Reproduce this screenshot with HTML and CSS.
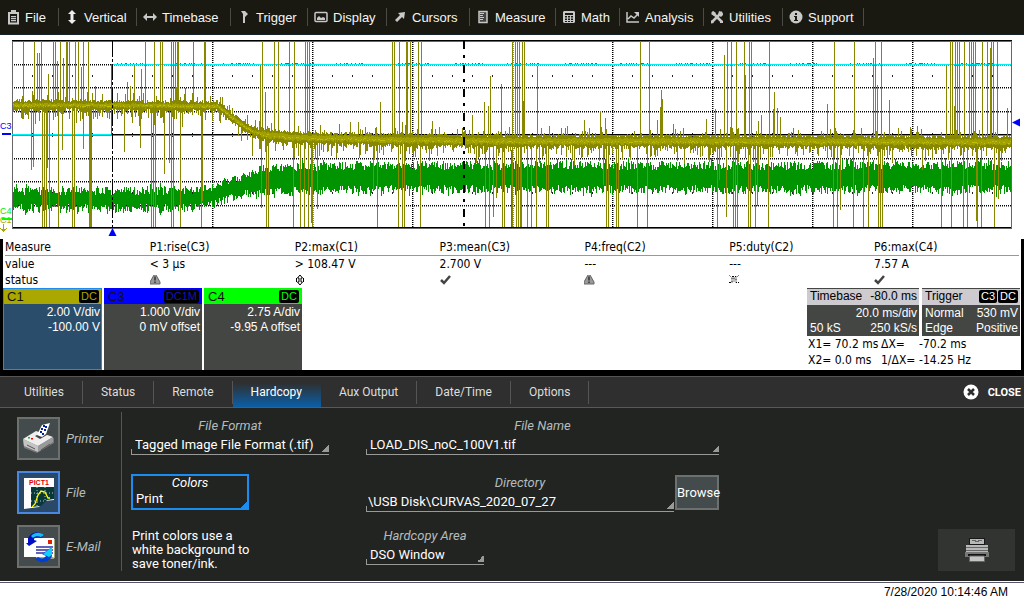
FILE: index.html
```html
<!DOCTYPE html>
<html lang="en">
<head>
<meta charset="utf-8">
<title>Oscilloscope – Hardcopy</title>
<link rel="stylesheet" href="styles.css">
</head>
<body>
<nav class="menubar">
  <button class="menu"><svg class="icon" viewBox="0 0 16 16"><path d="M4 4h9v10.500H4z" fill="none" stroke="#c8c8c8" stroke-width="2"/><path d="M6 1h5v3H6zM6 7h5v1.200H6zM6 9h5v1.200H6zM6 11h5v1.200H6z" fill="#c8c8c8"/></svg>File</button>
  <button class="menu"><svg class="icon" viewBox="0 0 16 16"><path d="M8 1l4 4H9.500v6H12l-4 4-4-4h2.500V5H4z" fill="#eee"/></svg>Vertical</button>
  <button class="menu"><svg class="icon" viewBox="0 0 16 16"><path d="M1 8l4-4v3h6V4l4 4-4 4V9H5v3z" fill="#c8c8c8"/></svg>Timebase</button>
  <button class="menu"><svg class="icon" viewBox="0 0 16 16"><path d="M7 2h2v12H7zM5 2h4l3 3-3 3z" fill="#c8c8c8"/></svg>Trigger</button>
  <button class="menu"><svg class="icon" viewBox="0 0 16 16"><rect x="2" y="3.500" width="12" height="9" rx="1" fill="none" stroke="#c8c8c8" stroke-width="1.500"/><path d="M4 11V9l2-2 2 2 2-1 2 1v2z" fill="#c8c8c8"/></svg>Display</button>
  <button class="menu"><svg class="icon" viewBox="0 0 16 16"><path d="M13 3l-1 7-2-2-5 5-2-2 5-5-2-2z" fill="#c8c8c8"/></svg>Cursors</button>
  <button class="menu"><svg class="icon" viewBox="0 0 16 16"><path d="M4 2.500h8v11H4z" fill="#444" stroke="#c8c8c8" stroke-width="1.500"/><path d="M5 4h4v1H5zM5 6h3v1H5zM5 8h4v1H5zM5 10h3v1H5z" fill="#c8c8c8"/></svg>Measure</button>
  <button class="menu"><svg class="icon" viewBox="0 0 16 16"><path fill-rule="evenodd" d="M3 2h10l1 1v10l-1 1H3l-1-1V3zM4 4v2h8V4zM4 7v1.500h2V7zM7 7v1.500h2V7zM10 7v1.500h2V7zM4 9.500V11h2V9.500zM7 9.500V11h2V9.500zM10 9.500V11h2V9.500zM4 12v1h2v-1zM7 12v1h2v-1zM10 12v1h2v-1z" fill="#c8c8c8"/></svg>Math</button>
  <button class="menu"><svg class="icon" viewBox="0 0 16 16"><path d="M2 3v10h12M3 10l3-3 3 2 4-4" fill="none" stroke="#c8c8c8" stroke-width="1.500"/><path d="M9 3h5v5z" fill="#c8c8c8"/></svg>Analysis</button>
  <button class="menu"><svg class="icon" viewBox="0 0 16 16"><path d="M3 3l10 10M13 3L3 13" stroke="#c8c8c8" stroke-width="2.500"/><path d="M10 2l2 1v2l2-1v2l-2 2-3-2zM2 5l3 2 2-3-3-2v2zM2 11l3 3-3 .5zM11 11l3 1v2h-3z" fill="#c8c8c8"/></svg>Utilities</button>
  <button class="menu"><svg class="icon" viewBox="0 0 16 16"><circle cx="8" cy="8" r="6.500" fill="#c8c8c8"/><path d="M7 4h2v2H7zM6 7h3v4h1v1H6v-1h1V8H6z" fill="#191911"/></svg>Support</button>
</nav>

<main class="screen">
  <svg class="scope" id="scope" viewBox="0 35 1024 204" role="img" aria-label="Waveform grid"></svg>

  <section class="readout">
    <table class="measure">
      <thead><tr><th>Measure</th><th>P1:rise(C3)</th><th>P2:max(C1)</th><th>P3:mean(C3)</th><th>P4:freq(C2)</th><th>P5:duty(C2)</th><th>P6:max(C4)</th></tr></thead>
      <tbody>
        <tr><td>value</td><td>&lt; 3 µs</td><td>&gt; 108.47 V</td><td>2.700 V</td><td>---</td><td>---</td><td>7.57 A</td></tr>
        <tr><td>status</td>
          <td><svg class="flag" viewBox="0 0 12 12"><path d="M4 1h2l4 7v2H0V8z" fill="#999"/><path d="M4 1L0 8v2h10V8L6 1" fill="none" stroke="#666"/><path d="M4.500 2.500h1v4h-1zM4.500 7.500h1v1.500h-1z" fill="#000"/></svg></td>
          <td><svg class="flag" viewBox="0 0 12 12"><path d="M5 1L2.500 4H4v4H2.500L5 11l2.500-3H6V4h1.500z" fill="#fff" stroke="#000"/><path d="M1.500 4v4M8.500 4v4" stroke="#000"/></svg></td>
          <td><svg class="flag" viewBox="0 0 12 12"><path d="M1 6l3 3 6-7" fill="none" stroke="#444" stroke-width="2.500"/></svg></td>
          <td><svg class="flag" viewBox="0 0 12 12"><path d="M4 1h2l4 7v2H0V8z" fill="#999"/><path d="M4 1L0 8v2h10V8L6 1" fill="none" stroke="#666"/><path d="M4.500 2.500h1v4h-1zM4.500 7.500h1v1.500h-1z" fill="#000"/></svg></td>
          <td><svg class="flag" viewBox="0 0 12 12"><path d="M0 8.500h3v-6h4v6h3M5 3.500v4" fill="none" stroke="#000" stroke-dasharray="2 1"/><path d="M0 1l2 2M10 1L8 3" stroke="#888"/></svg></td>
          <td><svg class="flag" viewBox="0 0 12 12"><path d="M1 6l3 3 6-7" fill="none" stroke="#444" stroke-width="2.500"/></svg></td>
        </tr>
      </tbody>
    </table>

    <div class="descriptors">
      <button class="channel channel-c1"><span class="channel-head"><span>C1</span><span class="badge">DC</span></span><span class="channel-line">2.00 V/div</span><span class="channel-line">-100.00 V</span></button>
      <button class="channel channel-c3"><span class="channel-head"><span>C3</span><span class="badge">DC1M</span></span><span class="channel-line">1.000 V/div</span><span class="channel-line">0 mV offset</span></button>
      <button class="channel channel-c4"><span class="channel-head"><span>C4</span><span class="badge">DC</span></span><span class="channel-line">2.75 A/div</span><span class="channel-line">-9.95 A offset</span></button>
      <div class="acquisition">
        <div class="boxes">
          <button class="box"><span class="box-head"><span>Timebase</span><span>-80.0 ms</span></span><span class="box-line"><span></span><span>20.0 ms/div</span></span><span class="box-line"><span>50 kS</span><span>250 kS/s</span></span></button>
          <button class="box"><span class="box-head"><span>Trigger</span><span class="badges"><span class="badge badge-light">C3</span><span class="badge badge-light">DC</span></span></span><span class="box-line"><span>Normal</span><span>530 mV</span></span><span class="box-line"><span>Edge</span><span>Positive</span></span></button>
        </div>
        <div class="cursors"><span>X1= 70.2 ms</span><span>ΔX=</span><span>-70.2 ms</span><span>X2= 0.0 ms</span><span>1/ΔX=</span><span>-14.25 Hz</span></div>
      </div>
    </div>
  </section>
</main>

<section class="dialog">
  <div class="tabs">
    <button class="tab">Utilities</button><button class="tab">Status</button><button class="tab">Remote</button><button class="tab tab-active">Hardcopy</button><button class="tab">Aux Output</button><button class="tab">Date/Time</button><button class="tab">Options</button>
    <button class="close"><svg class="close-icon" viewBox="0 0 16 16"><circle cx="8" cy="8" r="7.500" fill="#fff"/><path d="M5 5l6 6M11 5l-6 6" stroke="#2f2f2f" stroke-width="2.500"/></svg>CLOSE</button>
  </div>

  <form class="panel">
    <div class="targets">
      <button type="button" class="target"><span class="tile"><svg class="art" viewBox="0 0 32 32"><path d="M0 17l14-8 17 6v5l-17 10L1 25z" fill="#777"/><path d="M0 16l13-8 17 6-15 9z" fill="#eee"/><path d="M0 16l15 7v6L1 23z" fill="#c4c4c4"/><path d="M15 23l15-9v5l-15 10z" fill="#999"/><path d="M12 13l12-6 5 2-12 7z" fill="#444"/><path d="M14 12l5-10 8-2-4 11-4 3z" fill="#fff"/><path d="M18 6h2M22 4h2M17 9h2M21 7h2M20 3h2M19 11h2" stroke="#0020a0" stroke-width="2"/><path d="M5 14h2v1.500H5z" fill="#0c0"/><path d="M8 15h2v1.500H8z" fill="#e00"/><path d="M4 22l8 4M18 27l9-6" stroke="#555"/></svg></span>Printer</button>
      <button type="button" class="target target-active"><span class="tile"><svg class="art" viewBox="0 0 32 32"><path d="M1 1h30v22l-10 1-5 6-15 2z" fill="#fff"/><path d="M8 10h23v12l-7 1-6 6-10 1z" fill="#083838"/><path d="M8 16h23M14 10v19M22 10v14M8 24h15" stroke="#b8c8c8" stroke-dasharray="1 2"/><path d="M9 30l3-3 3-9 3-4 4 1 3 6h2" fill="none" stroke="#ff0" stroke-width="1.300"/><text class="pict" x="6" y="8">PICT1</text></svg></span>File</button>
      <button type="button" class="target"><span class="tile"><svg class="art" viewBox="0 0 32 32"><path d="M1 7h30v19H1z" fill="#fff"/><path d="M13 27h18V8" fill="none" stroke="#ff9"/><path d="M25 9h4v4h-4z" fill="#e02000"/><path d="M13 16h17M13 19h17M13 22h17" stroke="#3030a0" stroke-width="1.500"/><path d="M3 12h2V7C8 1 15-1 21 4l-3 3c-3-2-6-1-7 1v1l3 1-8 5z" fill="#0010c0"/><path d="M8 5c4-4 9-4 13-1l-3 2c-3-1-6-1-8 1z" fill="#10c0f0"/><path d="M29 16v9c-3 7-12 8-17 3l3-2c3 2 6 2 8-1l-4-2z" fill="#0040d0"/><path d="M29 16v8l-3 2-6-3z" fill="#10d0f8"/></svg></span>E-Mail</button>
    </div>

    <div class="column column-narrow">
      <div class="field"><label class="label" for="format">File Format</label><select class="value" id="format"><option>Tagged Image File Format (.tif)</option></select></div>
      <div class="field field-focus"><label class="label" for="colors">Colors</label><select class="value" id="colors"><option>Print</option></select></div>
      <p class="note">Print colors use a white background to save toner/ink.</p>
    </div>

    <div class="column column-wide">
      <div class="field"><label class="label" for="name">File Name</label><input class="value" id="name" type="text" value="LOAD_DIS_noC_100V1.tif"></div>
      <div class="with-button">
        <div class="field"><label class="label" for="dir">Directory</label><input class="value value-path" id="dir" type="text" value="\USB Disk\CURVAS_2020_07_27"></div>
        <button type="button" class="browse">Browse</button>
      </div>
      <div class="field field-short"><label class="label" for="area">Hardcopy Area</label><select class="value" id="area"><option>DSO Window</option></select></div>
    </div>

    <button type="button" class="print" aria-label="Print"><svg class="print-icon" viewBox="0 0 24 24"><path d="M4 0h16v7H4z" fill="#181818"/><path d="M5 1h14v5H5zM1 7h22v9H1z" fill="#b8b8b8"/><path d="M7 2h4v1H7zM13 2h4v1h-4zM10 3h4v1h-4zM1 9h22v1H1zM1 12h22v1H1z" fill="#666"/><path d="M0 14h24v5H0z" fill="#777"/><path d="M3 16h18v2H3z" fill="#111"/><path d="M4.500 18h15v5.500h-15z" fill="#c4c4c4" stroke="#666"/></svg></button>
  </form>
</section>

<footer class="clock">7/28/2020 10:14:46 AM</footer>
<script src="scope.js"></script>
</body>
</html>
```

FILE: styles.css
```css
* { box-sizing: border-box; }

body {
  margin: 0;
  min-height: 100vh;
  background: #fff;
  color: #000;
  font-family: "Liberation Sans", Arial, sans-serif;
  font-size: 12px;
}

button, input, select {
  margin: 0;
  padding: 0;
  border: 0;
  border-radius: 0;
  background: none;
  color: inherit;
  font: inherit;
}

/* Menu bar */
.menubar {
  display: grid;
  grid-template-columns: 59px 78px 94px 77px 79px 83px 86px 64px 84px 79px 81px;
  height: 35px;
  padding: 8px 0;
  background: #191911;
  border-bottom: 1px solid #14202a;
  color: #f4f4f4;
  font-size: 13px;
}
.menu {
  display: flex;
  align-items: center;
  gap: 4px;
  padding-left: 5px;
  border-right: 1px solid #4a4a46;
  white-space: nowrap;
}
.icon { width: 16px; height: 16px; flex: none; }

/* Waveform display */
.scope { display: block; width: 100%; height: auto; }
.scope-tag { font: 9px "Liberation Sans", sans-serif; }

/* Measurements and descriptors */
.readout {
  border: solid #000;
  border-width: 0 3px 6px;
}
.measure {
  width: calc(100% - 4px);
  margin-left: 2px;
  border-collapse: collapse;
  table-layout: fixed;
  font: 12px/16px "DejaVu Sans Condensed", "DejaVu Sans", sans-serif;
}
.measure th, .measure td {
  height: 16px;
  padding: 0;
  font-weight: normal;
  text-align: left;
  white-space: nowrap;
}
.measure th { border-bottom: 1px solid #999; }
.flag { display: block; width: 12px; height: 12px; }

.descriptors { display: flex; gap: 2px; align-items: stretch; }
.channel {
  display: flex;
  flex-direction: column;
  width: 98px;
  height: 82px;
  background: #444643;
  color: #fff;
  line-height: 15px;
  text-align: right;
}
.channel-head {
  display: flex;
  justify-content: space-between;
  align-items: center;
  height: 16px;
  margin-bottom: 1px;
  padding: 0 3px 0 4px;
  color: #111;
  font-size: 13px;
}
.channel-line { padding-right: 2px; }
.channel-c1 { width: 99px; background: #2a4d6c; outline: 1px solid #1c8cf0; outline-offset: -1px; }
.channel-c1 .channel-head { background: #aaa800; }
.channel-c1 .badge { color: #aaa800; }
.channel-c3 .channel-head { background: #00f; }
.channel-c3 .badge { color: #1414b4; }
.channel-c4 .channel-head { background: #0f0; }
.channel-c4 .badge { color: #0f0; }
.badge {
  padding: 0 2px;
  border-radius: 2px;
  background: #000;
  font-size: 11px;
  line-height: 13px;
}
.badge-light { color: #fff; }
.badges { display: flex; gap: 1px; }

.acquisition { width: 213px; margin-left: auto; margin-right: 1px; }
.boxes { display: grid; grid-template-columns: 112px 98px; gap: 3px; }
.box {
  height: 48px;
  background: #444643;
  color: #fff;
  line-height: 15px;
  white-space: nowrap;
}
.box-head, .box-line {
  display: flex;
  justify-content: space-between;
  align-items: center;
  padding: 0 2px 0 3px;
}
.box-head {
  height: 16px;
  margin-bottom: 1px;
  background: #cdcbcf;
  color: #000;
}
.cursors {
  display: grid;
  grid-template-columns: 73px 38px auto;
  padding-left: 1px;
  font: 12px/16px "DejaVu Sans Condensed", "DejaVu Sans", sans-serif;
  white-space: nowrap;
}

/* Dialog */
.dialog {
  background: #222422;
  color: #fff;
  font-family: Roboto, sans-serif;
}
.tabs {
  display: flex;
  height: 32px;
  border-top: 1px solid #555;
  border-bottom: 1px solid #0a6cc4;
  background: #2f2f2f;
}
.tab {
  padding: 0 19px 0 18px;
  background: linear-gradient(#555, #555) right 4px / 1px 23px no-repeat;
  color: #ddd;
}
.tab:first-child { padding-left: 24px; }
.tab-active { background: linear-gradient(#2f2f2f 20%, #0b5fa8); color: #fff; }
.close {
  display: flex;
  align-items: center;
  gap: 9px;
  margin-left: auto;
  padding-right: 3px;
  font-size: 11px;
  font-weight: bold;
}
.close-icon { width: 16px; height: 16px; }

.panel {
  display: flex;
  padding: 4px 9px 10px 17px;
  font-size: 13px;
}
.targets {
  display: flex;
  flex-direction: column;
  gap: 11px;
  width: 105px;
  padding: 5px 0 2px;
  border-right: 1px solid #555;
}
.target {
  display: flex;
  align-items: center;
  gap: 6px;
  color: #b4bcbc;
  font-style: italic;
}
.tile {
  display: grid;
  place-items: center;
  width: 43px;
  height: 43px;
  border: 2px solid #6c706e;
  background: #444b4c;
}
.target-active .tile { border-color: #4888e0; background: #2a4868; }
.art { width: 32px; height: 32px; }
.pict { fill: #e00000; font: bold 7px "Liberation Sans", sans-serif; }

.column { display: flex; flex-direction: column; padding-top: 6px; }
.column-narrow { width: 198px; margin-left: 9px; }
.column-wide { width: 353px; margin-left: 37px; }
.field { display: flex; flex-direction: column; height: 37px; }
.label {
  color: #b4bcbc;
  font-style: italic;
  line-height: 16px;
  text-align: center;
}
.value {
  width: 100%;
  height: 21px;
  padding: 0 4px 1px;
  appearance: none;
  outline: 0;
  background:
    linear-gradient(135deg, transparent 50%, #999 50%) right bottom 3px / 7px 7px no-repeat,
    linear-gradient(#999, #999) left bottom / 100% 1px no-repeat,
    linear-gradient(#999, #999) left bottom / 1px 6px no-repeat;
  color: #fff;
}
.value-path { padding-left: 2px; }
.field-focus {
  width: 118px;
  height: 36px;
  margin-top: 19px;
  border: 2px solid #1c8cf0;
  background: linear-gradient(135deg, transparent 50%, #1c8cf0 50%) right bottom / 7px 7px no-repeat;
}
.field-focus .label { color: #fff; line-height: 13px; }
.field-focus .value { padding-left: 3px; background: none; }
.note { width: 120px; margin: 19px 0 0; padding-left: 1px; line-height: 14px; }
.with-button { display: flex; gap: 1px; margin: 20px 0 16px; }
.with-button .field { flex: 1; }
.browse {
  width: 44px;
  height: 35px;
  border: 2px solid #6c706e;
  background: #444b4c;
}
.field-short { width: 118px; }
.print {
  display: grid;
  place-items: center;
  align-self: flex-end;
  width: 77px;
  height: 42px;
  margin-left: auto;
  background: #323432;
}
.print-icon { width: 24px; height: 24px; }

.clock {
  margin-top: 1px;
  padding: 2px 16px 0 0;
  border-top: 1px solid #556;
  text-align: right;
}
```

FILE: scope.js
```js
const svg = document.getElementById('scope');
const NS = 'http://www.w3.org/2000/svg';

function add(name, attrs, text) {
  const el = document.createElementNS(NS, name);
  for (const key in attrs) el.setAttribute(key, attrs[key]);
  if (text) el.textContent = text;
  svg.appendChild(el);
}
function line(d, stroke, extra) {
  add('path', Object.assign({ d, stroke, fill: 'none', 'shape-rendering': 'crispEdges' }, extra));
}

let seed = 7;
function rnd() {
  seed = (seed * 1664525 + 1013904223) % 4294967296;
  return seed / 4294967296;
}
function level(points, x) {
  let i = 1;
  while (i < points.length - 1 && points[i][0] < x) i++;
  const [x0, y0] = points[i - 1], [x1, y1] = points[i];
  return y0 + (y1 - y0) * (x - x0) / (x1 - x0);
}

// Graticule: each dotted line has a black row and a fainter one beside it
let dotted = '', shade = '';
for (const y of [64, 87, 111, 158, 181, 205]) {
  dotted += `M14 ${y + .5}H1011`;
  shade += `M14 ${y + 1.5}H1011`;
}
for (let x = 212; x < 1000; x += 100) {
  dotted += `M${x + .5} 42V227`;
  shade += `M${x + 1.5} 42V227`;
}
line(shade, '#888', { 'stroke-dasharray': '1 1' });
line(dotted, '#000', { 'stroke-dasharray': '1 1' });
let ticks = '';
for (let x = 32; x < 1011; x += 20) ticks += `M${x + .5} 75v2M${x + .5} 133v4M${x + .5} 192v2`;
line(ticks, '#222');
line('M12 134.5H1011', '#000');
line('M12 135.5H1011', '#888');
line('M12 40.5H1012M12 227.5H1012', '#000');
line('M12.5 41V228M1011.5 41V228M12 41.5H1011M12 228.5H1012', '#666');

// C3 logic level
line('M12 134.5H111M112 64.5H1011', '#00f0f8');
line('M111.5 64V135', '#008888');
let blips = '';
for (let x = 113; x < 1010; x += 1 + Math.floor(rnd() * 4)) {
  if (Math.sin(x / 9) + rnd() > .4) blips += `M${x} 63.5h1`;
}
line(blips, '#008c94');

// C4 current
const current = [[12, 199], [195, 199], [212, 195], [235, 187], [260, 181], [290, 178], [400, 177], [1011, 177]];
let green = '';
for (let x = 13; x < 1011; x++) {
  const y = level(current, x), grow = x > 250 ? 3 : 0;
  const a = 4 + grow + rnd() * 9 + (rnd() > .9 ? 3 : 0);
  const b = 5 + grow + rnd() * 9 + (rnd() > .9 ? 3 : 0);
  green += `M${x + .5} ${Math.round(y - a)}V${Math.round(y + b)}`;
}
line(green, '#009400');

// C1 full-height and partial glitches: [x, end y]
const T = 41, B = 227;
const up = [[23,T],[34,T],[41,T],[37,53],[39,53],[48,74],[53,T],[55,T],[57,61],[60,T],[63,58],[66,T],[67,T],[69,T],[75,T],[78,T],[81,67],[83,T],[88,T],
  [127,82],[134,65],[141,69],[145,T],[154,T],[160,T],[162,T],[171,T],[173,T],[175,T],[177,T],[178,T],[193,T],[204,T],[205,T],[185,88],
  [260,65],[262,T],[265,92],[274,T],[278,T],[289,T],[294,T],[305,T],[307,T],[309,T],[380,102],[392,T],[394,T],[399,T],[406,T],[407,T],[410,T],[418,T],[421,T],
  [472,115],[484,102],[488,106],[490,76],[501,84],[512,T],[515,T],[517,T],[519,T],[522,T],[523,101],[524,T],[537,66],[600,111],[605,118],[640,T],[649,T],[660,107],[661,90],[662,99],
  [715,109],[724,55],[727,T],[731,T],[736,T],[744,T],[745,75],[749,T],[751,T],[761,115],[769,T],[773,109],[774,92],[777,108],[827,104],[834,T],[854,T],[873,58],[875,T],[877,85],[881,T],[889,100],
  [946,65],[950,T],[952,T],[954,106],[955,T],[957,T],[959,T],[964,T],[969,T],[971,T],[973,T],[975,T],[982,T],[987,T],[990,48],[991,T],[993,T],[997,T],[1007,108]];
const down = [[31,170],[33,167],[42,B],[44,B],[46,B],[47,168],[49,B],[58,B],[62,150],[72,B],[74,B],[83,149],[89,B],[90,B],[91,B],
  [124,152],[140,148],[151,B],[153,B],[155,B],[164,174],[169,163],[171,B],[173,B],[180,B],[201,B],[202,201],
  [252,156],[261,208],[266,B],[268,B],[293,B],[300,B],[304,B],[308,B],[311,223],[312,B],[317,209],[373,190],[377,B],[398,B],[402,B],[404,B],[420,B],
  [485,B],[489,B],[493,217],[496,198],[502,B],[504,B],[512,B],[516,B],[518,B],[520,B],[521,B],[527,B],[531,B],[536,B],[546,B],[548,B],[603,185],[606,B],[608,B],[616,B],[618,B],[637,B],[647,B],
  [717,B],[719,180],[726,217],[733,B],[735,B],[737,B],[748,B],[750,B],[755,B],[757,206],[768,B],[833,B],[837,B],[840,210],[853,B],[863,B],[868,B],[878,B],[880,B],[882,B],
  [941,B],[951,B],[963,B],[967,B],[976,221],[977,B],[981,B],[994,B],[998,199]];
const volts = [[12, 105], [217, 106], [230, 116], [240, 124], [253, 132], [267, 135], [300, 138], [400, 140], [480, 141], [1011, 142]];
let wide = '', spikes = '', core = '', bright = '';
for (const [x, y] of up.concat(down)) spikes += `M${x + .5} ${y}V${Math.round(level(volts, x))}`;
for (let x = 13; x < 1011; x++) {
  const y = level(volts, x), right = x > 260 ? 1 : 0;
  let a = 3 + right + rnd() * 3, b = 3 + right + rnd() * 4;
  if (rnd() > .8) a += rnd() * 9;
  if (rnd() > .97) a += rnd() * 16;
  if (rnd() > .7) b += rnd() * 10;
  if (rnd() > .93) b += rnd() * 16;
  wide += `M${x + .5} ${Math.round(y - a)}V${Math.round(y + b)}`;
  core += `M${x + .5} ${Math.round(y - 1 - right - rnd() * 1.5)}v${3 + 2 * right + Math.round(rnd())}`;
  if (rnd() > .5) bright += `M${x} ${Math.round(y - 1 + rnd() * 2) + .5}h1`;
}
line('M512 150V227', '#666', { 'stroke-width': 2 });
line(spikes, '#888800');
line(wide, '#888800');
line(core, '#a0a000');
line(bright, '#c0c000');

// Cursors
line('M112.5 41V227', '#000', { 'stroke-dasharray': '16 2 3 2' });
line('M464 41V227', '#000', { 'stroke-width': 2, 'stroke-dasharray': '8 6 3 7' });

// Markers outside the grid
add('path', { d: 'M112.500 228l4 8h-8zM1012 122.500l8-4v8z', fill: '#00f' });
line('M2 134H11', '#00f', { 'stroke-width': 2 });
line('M3.500 224V231M0 228l3.500 3 3.500-3', '#a8a800');
add('text', { x: 0, y: 129, fill: '#00f', class: 'scope-tag' }, 'C3');
add('text', { x: 0, y: 223, fill: '#a8a800', class: 'scope-tag' }, 'C1');
line('M2 219H12', '#0f0', { 'stroke-width': 2 });
add('text', { x: 0, y: 214, fill: '#0e0', class: 'scope-tag' }, 'C4');
```
